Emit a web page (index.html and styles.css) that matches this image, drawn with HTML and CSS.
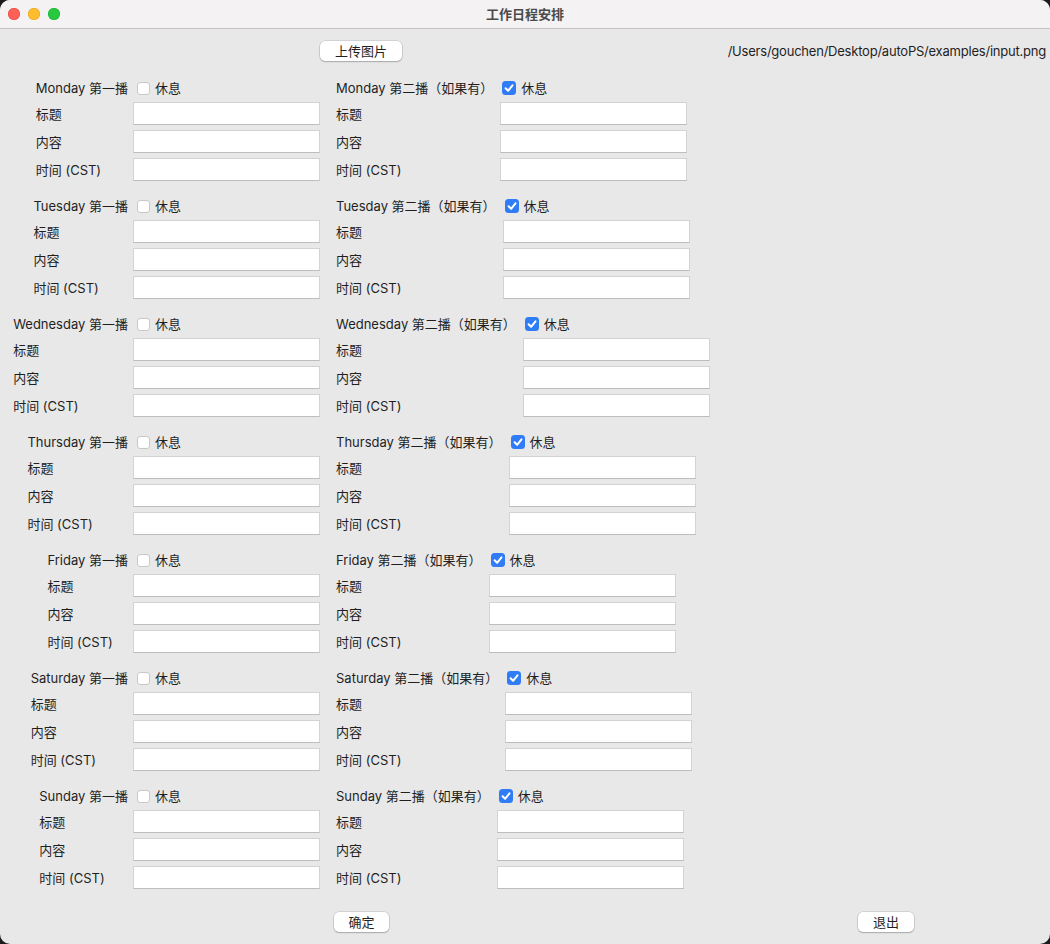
FILE: index.html
```html
<!DOCTYPE html>
<html lang="zh">
<head>
<meta charset="utf-8">
<title>工作日程安排</title>
<link rel="stylesheet" href="styles.css">
</head>
<body>
<div class="window">
  <div class="titlebar">
    <div class="lights">
      <span class="light red"></span>
      <span class="light yellow"></span>
      <span class="light green"></span>
    </div>
    <div class="title">工作日程安排</div>
    <div></div>
  </div>
  <div class="content">
    <div class="toprow">
      <button class="btn upload">上传图片</button>
      <span class="path">/Users/gouchen/Desktop/autoPS/examples/input.png</span>
    </div>

    <div class="days">
      <!-- Monday -->
      <div class="day">
        <div class="left"><div class="form">
          <span class="lbl">Monday 第一播</span><span class="chk"><span class="box"></span><span class="rest">休息</span></span>
          <span class="lbl">标题</span><input class="field" type="text">
          <span class="lbl">内容</span><input class="field" type="text">
          <span class="lbl">时间 (CST)</span><input class="field" type="text">
        </div></div>
        <div class="right"><div class="form">
          <span class="lbl">Monday 第二播（如果有）</span><span class="chk"><span class="box on"><svg viewBox="0 0 14 14"><path d="M3.6 7.3 L6.1 9.8 L10.5 4.3"/></svg></span><span class="rest">休息</span></span>
          <span class="lbl">标题</span><input class="field" type="text">
          <span class="lbl">内容</span><input class="field" type="text">
          <span class="lbl">时间 (CST)</span><input class="field" type="text">
        </div></div>
      </div>
      <!-- Tuesday -->
      <div class="day">
        <div class="left"><div class="form">
          <span class="lbl">Tuesday 第一播</span><span class="chk"><span class="box"></span><span class="rest">休息</span></span>
          <span class="lbl">标题</span><input class="field" type="text">
          <span class="lbl">内容</span><input class="field" type="text">
          <span class="lbl">时间 (CST)</span><input class="field" type="text">
        </div></div>
        <div class="right"><div class="form">
          <span class="lbl">Tuesday 第二播（如果有）</span><span class="chk"><span class="box on"><svg viewBox="0 0 14 14"><path d="M3.6 7.3 L6.1 9.8 L10.5 4.3"/></svg></span><span class="rest">休息</span></span>
          <span class="lbl">标题</span><input class="field" type="text">
          <span class="lbl">内容</span><input class="field" type="text">
          <span class="lbl">时间 (CST)</span><input class="field" type="text">
        </div></div>
      </div>
      <!-- Wednesday -->
      <div class="day">
        <div class="left"><div class="form">
          <span class="lbl">Wednesday 第一播</span><span class="chk"><span class="box"></span><span class="rest">休息</span></span>
          <span class="lbl">标题</span><input class="field" type="text">
          <span class="lbl">内容</span><input class="field" type="text">
          <span class="lbl">时间 (CST)</span><input class="field" type="text">
        </div></div>
        <div class="right"><div class="form">
          <span class="lbl">Wednesday 第二播（如果有）</span><span class="chk"><span class="box on"><svg viewBox="0 0 14 14"><path d="M3.6 7.3 L6.1 9.8 L10.5 4.3"/></svg></span><span class="rest">休息</span></span>
          <span class="lbl">标题</span><input class="field" type="text">
          <span class="lbl">内容</span><input class="field" type="text">
          <span class="lbl">时间 (CST)</span><input class="field" type="text">
        </div></div>
      </div>
      <!-- Thursday -->
      <div class="day">
        <div class="left"><div class="form">
          <span class="lbl">Thursday 第一播</span><span class="chk"><span class="box"></span><span class="rest">休息</span></span>
          <span class="lbl">标题</span><input class="field" type="text">
          <span class="lbl">内容</span><input class="field" type="text">
          <span class="lbl">时间 (CST)</span><input class="field" type="text">
        </div></div>
        <div class="right"><div class="form">
          <span class="lbl">Thursday 第二播（如果有）</span><span class="chk"><span class="box on"><svg viewBox="0 0 14 14"><path d="M3.6 7.3 L6.1 9.8 L10.5 4.3"/></svg></span><span class="rest">休息</span></span>
          <span class="lbl">标题</span><input class="field" type="text">
          <span class="lbl">内容</span><input class="field" type="text">
          <span class="lbl">时间 (CST)</span><input class="field" type="text">
        </div></div>
      </div>
      <!-- Friday -->
      <div class="day">
        <div class="left"><div class="form">
          <span class="lbl">Friday 第一播</span><span class="chk"><span class="box"></span><span class="rest">休息</span></span>
          <span class="lbl">标题</span><input class="field" type="text">
          <span class="lbl">内容</span><input class="field" type="text">
          <span class="lbl">时间 (CST)</span><input class="field" type="text">
        </div></div>
        <div class="right"><div class="form">
          <span class="lbl">Friday 第二播（如果有）</span><span class="chk"><span class="box on"><svg viewBox="0 0 14 14"><path d="M3.6 7.3 L6.1 9.8 L10.5 4.3"/></svg></span><span class="rest">休息</span></span>
          <span class="lbl">标题</span><input class="field" type="text">
          <span class="lbl">内容</span><input class="field" type="text">
          <span class="lbl">时间 (CST)</span><input class="field" type="text">
        </div></div>
      </div>
      <!-- Saturday -->
      <div class="day">
        <div class="left"><div class="form">
          <span class="lbl">Saturday 第一播</span><span class="chk"><span class="box"></span><span class="rest">休息</span></span>
          <span class="lbl">标题</span><input class="field" type="text">
          <span class="lbl">内容</span><input class="field" type="text">
          <span class="lbl">时间 (CST)</span><input class="field" type="text">
        </div></div>
        <div class="right"><div class="form">
          <span class="lbl">Saturday 第二播（如果有）</span><span class="chk"><span class="box on"><svg viewBox="0 0 14 14"><path d="M3.6 7.3 L6.1 9.8 L10.5 4.3"/></svg></span><span class="rest">休息</span></span>
          <span class="lbl">标题</span><input class="field" type="text">
          <span class="lbl">内容</span><input class="field" type="text">
          <span class="lbl">时间 (CST)</span><input class="field" type="text">
        </div></div>
      </div>
      <!-- Sunday -->
      <div class="day">
        <div class="left"><div class="form">
          <span class="lbl">Sunday 第一播</span><span class="chk"><span class="box"></span><span class="rest">休息</span></span>
          <span class="lbl">标题</span><input class="field" type="text">
          <span class="lbl">内容</span><input class="field" type="text">
          <span class="lbl">时间 (CST)</span><input class="field" type="text">
        </div></div>
        <div class="right"><div class="form">
          <span class="lbl">Sunday 第二播（如果有）</span><span class="chk"><span class="box on"><svg viewBox="0 0 14 14"><path d="M3.6 7.3 L6.1 9.8 L10.5 4.3"/></svg></span><span class="rest">休息</span></span>
          <span class="lbl">标题</span><input class="field" type="text">
          <span class="lbl">内容</span><input class="field" type="text">
          <span class="lbl">时间 (CST)</span><input class="field" type="text">
        </div></div>
      </div>
    </div>

    <div class="bottomrow">
      <button class="btn ok">确定</button>
      <button class="btn quit">退出</button>
    </div>
  </div>
</div>
</body>
</html>
```

FILE: styles.css
```css
* { box-sizing: border-box; }

html, body {
  margin: 0;
  padding: 0;
  background: #1c1c1e;
}

body {
  font-family: Inter, "Noto Sans CJK SC", sans-serif;
  font-size: 13px;
  color: #1f1f1f;
}

.window {
  width: 1050px;
  height: 944px;
  background: #e8e8e8;
  border-radius: 10px;
  overflow: hidden;
  display: flex;
  flex-direction: column;
}

.titlebar {
  height: 29px;
  flex: none;
  background: #f4f2f3;
  border-bottom: 1px solid #c3c3c3;
  display: grid;
  grid-template-columns: 1fr auto 1fr;
  align-items: center;
}

.lights {
  display: flex;
  gap: 8px;
  padding-left: 8px;
  padding-bottom: 1px;
}

.light {
  width: 12px;
  height: 12px;
  border-radius: 50%;
}
.light.red { background: #fe5f57; box-shadow: inset 0 0 0 0.5px #e2463f; }
.light.yellow { background: #febc2e; box-shadow: inset 0 0 0 0.5px #e1a116; }
.light.green { background: #28c840; box-shadow: inset 0 0 0 0.5px #14ae2a; }

.title {
  font-weight: 600;
  font-size: 13px;
  color: #4a4a4a;
  padding-bottom: 1px;
}

.content {
  flex: 1;
  display: flex;
  flex-direction: column;
  padding-top: 12px;
}

.toprow {
  display: flex;
  align-items: center;
  height: 20px;
  padding-left: 320px;
  padding-right: 4px;
}

.path {
  margin-left: auto;
  color: #1f1f1f;
  letter-spacing: -0.22px;
}

.btn {
  font-family: Inter, "Noto Sans CJK SC", sans-serif;
  font-size: 13px;
  color: #1f1f1f;
  height: 20px;
  background: #ffffff;
  border: none;
  border-radius: 5px;
  padding: 0;
  box-shadow: 0 0 0 0.5px rgba(0,0,0,0.18), 0 1px 1.5px rgba(0,0,0,0.2);
  line-height: 20px;
}

.upload { width: 82px; }

.days {
  margin-top: 18px;
  display: flex;
  flex-direction: column;
  gap: 16px;
}

.day {
  display: flex;
}

.left {
  width: 320px;
  display: flex;
  justify-content: flex-end;
}

.right {
  margin-left: 16px;
  display: flex;
}

.form {
  display: grid;
  grid-template-columns: auto 187px;
  grid-template-rows: 18px 23px 23px 23px;
  column-gap: 5px;
  row-gap: 5px;
  align-items: center;
}

.right .form {
  column-gap: 7px;
}

.lbl {
  white-space: nowrap;
  line-height: 18px;
}

.chk {
  display: flex;
  align-items: center;
  padding-left: 4px;
}

.right .chk {
  padding-left: 2px;
}

.box {
  width: 13px;
  height: 13px;
  border-radius: 3.5px;
  background: #ffffff;
  box-shadow: inset 0 0 0 1px #c8c8c8;
  display: flex;
}

.box.on {
  width: 14px;
  height: 14px;
  background: #2f7cf6;
  box-shadow: none;
}

.box svg {
  width: 14px;
  height: 14px;
}

.box svg path {
  fill: none;
  stroke: #ffffff;
  stroke-width: 2;
  stroke-linecap: round;
  stroke-linejoin: round;
}

.rest {
  margin-left: 5px;
  line-height: 18px;
}

.field {
  width: 187px;
  height: 23px;
  margin: 0;
  background: #ffffff;
  border: 1px solid #d3d3d3;
  border-bottom-color: #bdbdbd;
  border-radius: 0;
  outline: none;
  font: inherit;
  padding: 0 3px;
}

.bottomrow {
  margin-top: 23px;
  display: flex;
  align-items: center;
  padding-left: 334px;
  padding-right: 136px;
}

.ok { width: 55px; }
.quit { width: 56px; margin-left: auto; }
```
